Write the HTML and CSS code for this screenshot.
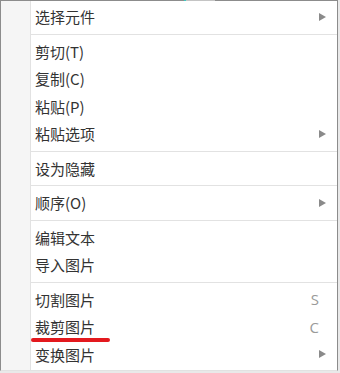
FILE: index.html
```html
<!DOCTYPE html>
<html lang="zh-CN">
<head>
    <meta charset="UTF-8">
    <meta name="viewport" content="width=device-width, initial-scale=1.0">
    <title>右键菜单</title>
    <link rel="stylesheet" href="styles.css">
</head>
<body>
    <div class="menu">
        <span class="edge-mark"></span>
        <div class="gutter"></div>
        <ul class="items">
            <li class="item">选择元件<span class="arrow"></span></li>
            <li class="sep"></li>
            <li class="item">剪切(T)</li>
            <li class="item">复制(C)</li>
            <li class="item">粘贴(P)</li>
            <li class="item">粘贴选项<span class="arrow"></span></li>
            <li class="sep"></li>
            <li class="item">设为隐藏</li>
            <li class="sep"></li>
            <li class="item">顺序(O)<span class="arrow"></span></li>
            <li class="sep"></li>
            <li class="item">编辑文本</li>
            <li class="item">导入图片</li>
            <li class="sep"></li>
            <li class="item">切割图片<span class="key">S</span></li>
            <li class="item marked">裁剪图片<span class="key">C</span></li>
            <li class="item">变换图片<span class="arrow"></span></li>
        </ul>
    </div>
</body>
</html>
```

FILE: styles.css
```css
body, html {
    margin: 0;
    padding: 0;
    background: #e9e9e9;
    height: 100%;
    overflow: hidden;
}
.menu {
    position: relative;
    display: flex;
    width: 336px;
    background: #fff;
    border: 1px solid #8c8c8c;
    border-bottom-color: #e2e2e2;
    font-family: "Microsoft YaHei", "Noto Sans CJK SC", sans-serif;
    font-size: 15px;
    color: #333;
}
.edge-mark {
    position: absolute;
    top: -1px;
    left: 183px;
    width: 29px;
    height: 1px;
    background: #c4c4c4;
    border-left: 2px solid #3cc8c0;
}
.gutter {
    width: 29px;
    background: #f5f5f5;
    border-right: 1px solid #e2e2e2;
}
.items {
    flex: 1;
    list-style: none;
    margin: 0;
    padding: 2px 0;
}
.item {
    position: relative;
    display: flex;
    align-items: center;
    height: 27.5px;
    padding-left: 4px;
}
.sep {
    height: 1px;
    margin: 3px 0;
    background: #e2e2e2;
}
.arrow {
    margin-left: auto;
    margin-right: 11px;
    width: 0;
    height: 0;
    border-top: 4.5px solid transparent;
    border-bottom: 4.5px solid transparent;
    border-left: 7px solid #8a8a8a;
}
.key {
    margin-left: auto;
    margin-right: 18px;
    color: #9a9a9a;
    font-family: "Open Sans", sans-serif;
}
.marked::after {
    content: "";
    position: absolute;
    left: 0;
    top: 25px;
    width: 79px;
    height: 4px;
    border-radius: 2px;
    background: #e3191e;
}
```
